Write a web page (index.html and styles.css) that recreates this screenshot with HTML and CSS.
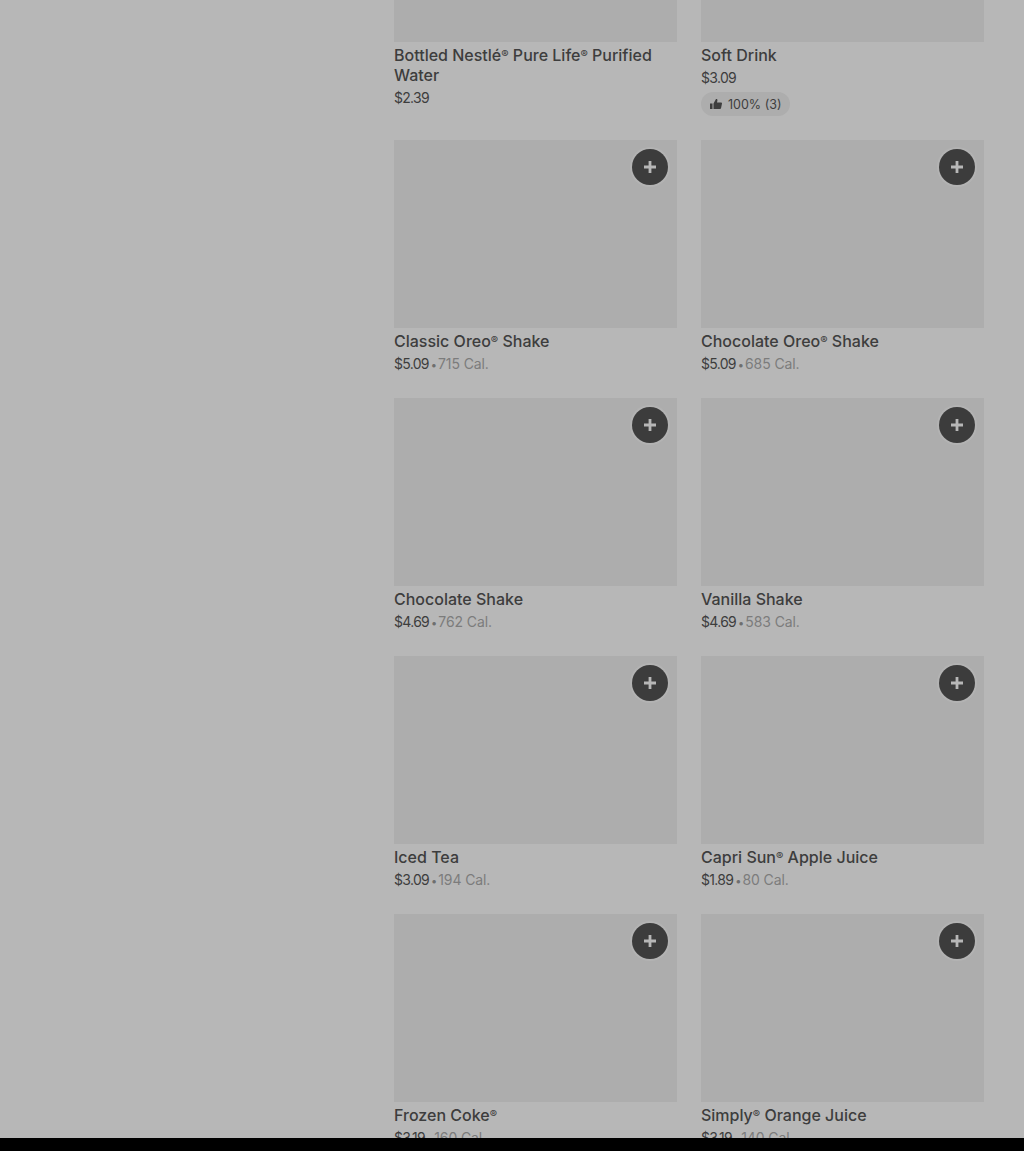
FILE: index.html
```html
<!DOCTYPE html>
<html lang="en">
	<head>
		<title>Menu</title>
		<meta charset="utf-8"/>
		<link rel="stylesheet" href="styles.css">
	</head>
	<body>
		<div class="page">
			<div class="items">
				<div class="item">
					<div class="photo photo-cut"></div>
					<p class="name">Bottled Nestlé<span class="reg">®</span> Pure Life<span class="reg">®</span> Purified Water</p>
					<p class="info"><span class="price">$2.39</span></p>
				</div>
				<div class="item">
					<div class="photo photo-cut"></div>
					<p class="name">Soft Drink</p>
					<p class="info"><span class="price">$3.09</span></p>
					<div class="rating">
						<svg class="thumb" viewBox="0 0 12 12"><path d="M0 5.5h2.5V11H0zM3.5 5.5L6 1c1-.3 1.6.4 1.4 1.4L7 4.5h4.2c.6 0 .9.5.8 1l-1 4.7c-.1.5-.5.8-1 .8H3.5z"/></svg>
						100% (3)
					</div>
				</div>
				<div class="item">
					<div class="photo"><button class="add"><svg viewBox="0 0 12 12"><path d="M4.6 0h2.8v4.6H12v2.8H7.4V12H4.6V7.4H0V4.6h4.6z"/></svg></button></div>
					<p class="name">Classic Oreo<span class="reg">®</span> Shake</p>
					<p class="info"><span class="price">$5.09</span><span class="dot">•</span><span class="cal">715 Cal.</span></p>
				</div>
				<div class="item">
					<div class="photo"><button class="add"><svg viewBox="0 0 12 12"><path d="M4.6 0h2.8v4.6H12v2.8H7.4V12H4.6V7.4H0V4.6h4.6z"/></svg></button></div>
					<p class="name">Chocolate Oreo<span class="reg">®</span> Shake</p>
					<p class="info"><span class="price">$5.09</span><span class="dot">•</span><span class="cal">685 Cal.</span></p>
				</div>
				<div class="item">
					<div class="photo"><button class="add"><svg viewBox="0 0 12 12"><path d="M4.6 0h2.8v4.6H12v2.8H7.4V12H4.6V7.4H0V4.6h4.6z"/></svg></button></div>
					<p class="name">Chocolate Shake</p>
					<p class="info"><span class="price">$4.69</span><span class="dot">•</span><span class="cal">762 Cal.</span></p>
				</div>
				<div class="item">
					<div class="photo"><button class="add"><svg viewBox="0 0 12 12"><path d="M4.6 0h2.8v4.6H12v2.8H7.4V12H4.6V7.4H0V4.6h4.6z"/></svg></button></div>
					<p class="name">Vanilla Shake</p>
					<p class="info"><span class="price">$4.69</span><span class="dot">•</span><span class="cal">583 Cal.</span></p>
				</div>
				<div class="item">
					<div class="photo"><button class="add"><svg viewBox="0 0 12 12"><path d="M4.6 0h2.8v4.6H12v2.8H7.4V12H4.6V7.4H0V4.6h4.6z"/></svg></button></div>
					<p class="name">Iced Tea</p>
					<p class="info"><span class="price">$3.09</span><span class="dot">•</span><span class="cal">194 Cal.</span></p>
				</div>
				<div class="item">
					<div class="photo"><button class="add"><svg viewBox="0 0 12 12"><path d="M4.6 0h2.8v4.6H12v2.8H7.4V12H4.6V7.4H0V4.6h4.6z"/></svg></button></div>
					<p class="name">Capri Sun<span class="reg">®</span> Apple Juice</p>
					<p class="info"><span class="price">$1.89</span><span class="dot">•</span><span class="cal">80 Cal.</span></p>
				</div>
				<div class="item">
					<div class="photo"><button class="add"><svg viewBox="0 0 12 12"><path d="M4.6 0h2.8v4.6H12v2.8H7.4V12H4.6V7.4H0V4.6h4.6z"/></svg></button></div>
					<p class="name">Frozen Coke<span class="reg">®</span></p>
					<p class="info"><span class="price">$3.19</span><span class="dot">•</span><span class="cal">160 Cal.</span></p>
				</div>
				<div class="item">
					<div class="photo"><button class="add"><svg viewBox="0 0 12 12"><path d="M4.6 0h2.8v4.6H12v2.8H7.4V12H4.6V7.4H0V4.6h4.6z"/></svg></button></div>
					<p class="name">Simply<span class="reg">®</span> Orange Juice</p>
					<p class="info"><span class="price">$3.19</span><span class="dot">•</span><span class="cal">140 Cal.</span></p>
				</div>
			</div>
		</div>
	</body>
</html>
```

FILE: styles.css
```css
html, body {
	margin: 0;
	height: 100%;
	background-color: #000;
}

p {
	margin: 0;
}

.page {
	height: 1138px;
	overflow: hidden;
	background-color: #b7b7b7;
	font-family: 'Inter', 'Roboto', sans-serif;
	color: #3d3d3d;
}

.items {
	display: grid;
	grid-template-columns: 283px 283px;
	column-gap: 24px;
	row-gap: 24px;
	padding-left: 394px;
}

.photo {
	height: 188px;
	position: relative;
	background-color: #adadad;
}

.photo-cut {
	height: 42px;
}

.name {
	margin-top: 3px;
	font-size: 16px;
	line-height: 20px;
	font-weight: 500;
}

.reg {
	display: inline-block;
	font-size: 11px;
	line-height: 0;
	vertical-align: 3px;
}

.info {
	margin-top: 3px;
	font-size: 14px;
	line-height: 20px;
}

.price {
	letter-spacing: -0.7px;
}

.dot {
	margin: 0 1px 0 2px;
	font-size: 11px;
	line-height: 0;
	color: #6e6e6e;
}

.cal {
	color: #7c7c7c;
	letter-spacing: -0.1px;
}

.rating {
	display: flex;
	align-items: center;
	gap: 6px;
	width: 89px;
	height: 24px;
	box-sizing: border-box;
	margin-top: 4px;
	padding-left: 9px;
	border-radius: 12px;
	background-color: #adadad;
	font-size: 12.5px;
}

.thumb {
	width: 12px;
	height: 12px;
	fill: #3d3d3d;
}

.add {
	position: absolute;
	top: 9px;
	right: 9px;
	width: 36px;
	height: 36px;
	padding: 0;
	display: flex;
	align-items: center;
	justify-content: center;
	border: none;
	border-radius: 50%;
	background-color: #3c3c3c;
	box-shadow: 0 0 0 2px #b3b3b3;
}

.add svg {
	width: 12px;
	height: 12px;
	fill: #b7b7b7;
}
```
